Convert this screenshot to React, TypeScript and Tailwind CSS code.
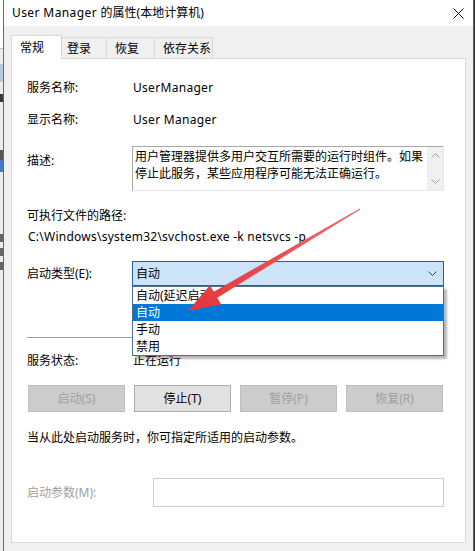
import React from "react";

const Chev = ({ up = false, color = "#a0a0a0" }: { up?: boolean; color?: string }) => (
  <svg width="9" height="5" viewBox="0 0 9 5" className="block">
    <path d={up ? "M0.5 4.5 L4.5 0.5 L8.5 4.5" : "M0.5 0.5 L4.5 4.5 L8.5 0.5"} fill="none" stroke={color} strokeWidth="1" />
  </svg>
);

export default function App() {
  return (
    <div className="relative w-[475px] h-[551px] overflow-hidden flex bg-[#f0f0f0] text-[12px] text-black font-['Noto_Sans','Noto_Sans_CJK_SC',sans-serif]">
      {/* background window strip */}
      <div className="w-[3px] h-full bg-[#ececec] flex flex-col">
        <div className="h-[48px] bg-white" />
        <div className="h-px bg-[#bdbdbd]" />
        <div className="h-[15px]" />
        <div className="h-[18px] bg-[#b9c9de]" />
        <div className="h-[12px]" />
        <div className="h-[8px] bg-[#3a3a3a]" />
        <div className="h-[48px]" />
        <div className="h-[10px] bg-[#555]" />
        <div className="h-[12px] bg-[#4a78c0]" />
        <div className="h-[62px]" />
        <div className="h-[8px] bg-[#666]" />
        <div className="h-[6px]" />
        <div className="h-[8px] bg-[#666]" />
        <div className="h-[6px]" />
        <div className="h-[8px] bg-[#666]" />
        <div className="flex-1" />
      </div>
      <div className="w-px h-full bg-[#6a6a6a]" />

      {/* dialog */}
      <div className="w-[469px] h-full flex flex-col">
        <div className="h-[26px] bg-white flex items-center justify-between pl-[8px] pr-[9px] shrink-0">
          <span className="leading-[16px]">
            <span className="tracking-[0.4px]">User Manager </span>的属性(本地计算机)
          </span>
          <svg width="11" height="11" viewBox="0 0 11 11" className="block">
            <path d="M0.5 0.5 L10.5 10.5 M10.5 0.5 L0.5 10.5" stroke="#111" strokeWidth="1" />
          </svg>
        </div>

        <div className="flex-1 flex flex-col px-[7px] pt-[9px] pb-[8px]">
          {/* tabs */}
          <div className="h-[24px] flex items-end shrink-0 relative z-10">
            <div className="w-[51px] h-[24px] bg-white border border-b-0 border-[#d9d9d9] pl-[8px] pt-[3px] leading-[17px]">常规</div>
            <div className="w-[46px] h-[22px] -ml-px bg-[#f0f0f0] border border-[#d9d9d9] pl-[5px] pt-[2px] leading-[17px]">登录</div>
            <div className="w-[49px] h-[22px] -ml-px bg-[#f0f0f0] border border-[#d9d9d9] pl-[8px] pt-[2px] leading-[17px]">恢复</div>
            <div className="w-[59px] h-[22px] -ml-px bg-[#f0f0f0] border border-[#d9d9d9] pl-[8px] pt-[2px] leading-[17px]">依存关系</div>
          </div>

          {/* panel */}
          <div className="flex-1 -mt-px bg-white border border-[#d9d9d9] pl-[15px] flex flex-col">
            <div className="mt-[19px] h-[20px] flex items-center">
              <div className="w-[105px]">服务名称:</div>
              <div className="pl-px tracking-[0.3px]">UserManager</div>
            </div>
            <div className="mt-[12px] h-[20px] flex items-center">
              <div className="w-[105px]">显示名称:</div>
              <div className="pl-px tracking-[0.3px]">User Manager</div>
            </div>
            <div className="mt-[16px] flex items-start">
              <div className="w-[105px] mt-[5px] leading-[20px]">描述:</div>
              <div className="w-[312px] h-[45px] border border-[#a8a8a8] border-b-[#e6e6e6] border-r-[#e6e6e6] flex">
                <div className="flex-1 pl-[2px] pt-[1px] leading-[17px]">
                  用户管理器提供多用户交互所需要的运行时组件。如果停止此服务，某些应用程序可能无法正确运行。
                </div>
                <div className="w-[16px] bg-[#f0f0f0] flex flex-col items-center justify-between pt-[6px] pb-[6px]">
                  <Chev up />
                  <Chev />
                </div>
              </div>
            </div>
            <div className="mt-[15px] h-[20px] flex items-center">可执行文件的路径:</div>
            <div className="mt-[1px] h-[20px] flex items-center pl-px tracking-[0.25px]">C:\Windows\system32\svchost.exe -k netsvcs -p</div>

            <div className="mt-[14px] flex items-center">
              <div className="w-[105px]">启动类型(E):</div>
              <div className="relative">
                <div className="w-[312px] h-[25px] bg-[#cce4f7] border border-[#1f63ad] flex items-center justify-between pl-[3px] pr-[6px]">
                  <span className="leading-[17px]">自动</span>
                  <Chev color="#3c3c3c" />
                </div>
                <div className="absolute left-0 top-[25px] w-[312px] bg-white border border-[#4d6f96] shadow-[3px_3px_2px_rgba(0,0,0,0.28)] z-20 flex flex-col">
                  <div className="h-[17px] pl-[3px] leading-[17px]">自动(延迟启动)</div>
                  <div className="h-[17px] pl-[3px] leading-[17px] bg-[#0078d7] text-white">自动</div>
                  <div className="h-[17px] pl-[3px] leading-[17px]">手动</div>
                  <div className="h-[17px] pl-[3px] leading-[17px]">禁用</div>
                </div>
              </div>
            </div>

            <div className="mt-[51px] h-px w-[417px] bg-[#a0a0a0]" />

            <div className="mt-[13px] h-[20px] flex items-center">
              <div className="w-[105px]">服务状态:</div>
              <div className="pl-px">正在运行</div>
            </div>

            <div className="mt-[14px] w-[416px] pl-px flex justify-between">
              <div className="w-[97px] h-[27px] bg-[#cccccc] border border-[#bfbfbf] text-[#a0a0a0] flex items-center justify-center">启动(S)</div>
              <div className="w-[97px] h-[27px] bg-[#e1e1e1] border border-[#adadad] flex items-center justify-center">停止(T)</div>
              <div className="w-[97px] h-[27px] bg-[#cccccc] border border-[#bfbfbf] text-[#a0a0a0] flex items-center justify-center">暂停(P)</div>
              <div className="w-[97px] h-[27px] bg-[#cccccc] border border-[#bfbfbf] text-[#a0a0a0] flex items-center justify-center">恢复(R)</div>
            </div>

            <div className="mt-[16px] h-[20px] flex items-center">当从此处启动服务时，你可指定所适用的启动参数。</div>

            <div className="mt-[30px] flex items-center">
              <div className="w-[126px] text-[#a0a0a0]">启动参数(M):</div>
              <div className="w-[291px] h-[29px] bg-white border border-[#cccccc]" />
            </div>
          </div>
        </div>
      </div>
      <div className="w-px h-full bg-[#5c5c5c]" />
      <div className="w-px h-full bg-[#2e2e2e]" />

      {/* red annotation arrow */}
      <svg className="absolute inset-0 pointer-events-none z-30" width="475" height="551" viewBox="0 0 475 551">
        <defs>
          <linearGradient id="ag" x1="360" y1="209" x2="188" y2="311" gradientUnits="userSpaceOnUse">
            <stop offset="0" stopColor="#f06a6a" />
            <stop offset="1" stopColor="#e2343a" />
          </linearGradient>
        </defs>
        <polygon
          points="359.7,208.6 213.7,291.7 209.9,285.2 188,311 221.1,304.2 217.3,297.7 360.3,209.4"
          fill="url(#ag)"
        />
      </svg>
    </div>
  );
}
